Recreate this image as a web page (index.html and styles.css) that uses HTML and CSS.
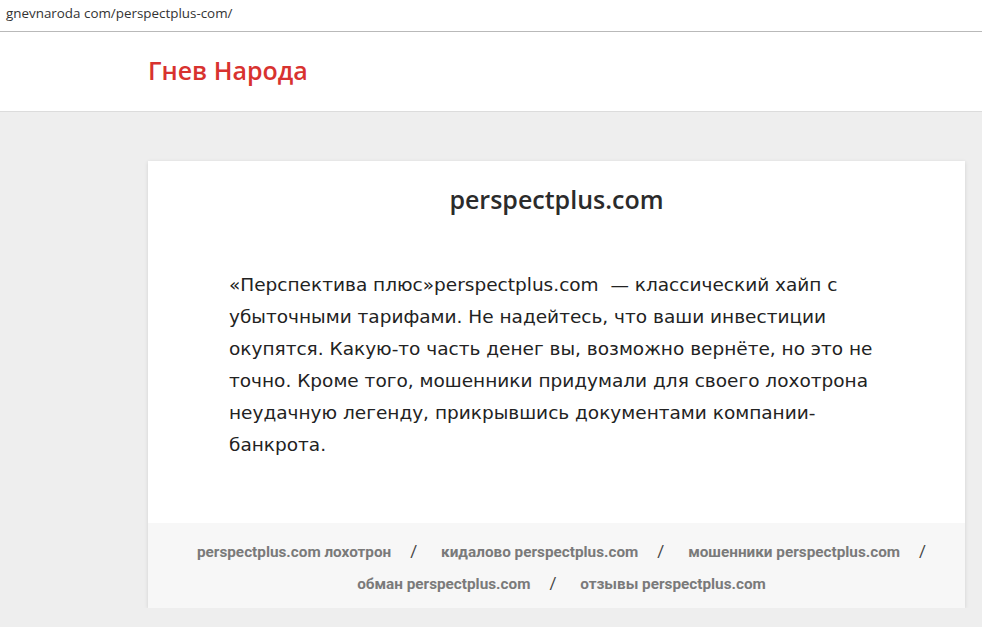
FILE: index.html
```html
<!DOCTYPE html>
<html lang="ru">
<head>
    <meta charset="UTF-8">
    <meta name="viewport" content="width=device-width, initial-scale=1.0">
    <title>perspectplus.com</title>
    <link rel="stylesheet" href="styles.css">
</head>
<body>
    <div class="urlbar">gnevnaroda com/perspectplus-com/</div>

    <header class="site-header">
        <div class="wrap">
            <a class="logo" href="#">Гнев Народа</a>
        </div>
    </header>

    <main class="wrap">
        <article class="post">
            <h1 class="post-title">perspectplus.com</h1>
            <div class="post-body">
                <p>«Перспектива плюс»perspectplus.com &nbsp;— классический хайп с убыточными тарифами. Не надейтесь, что ваши инвестиции окупятся. Какую-то часть денег вы, возможно вернёте, но это не точно. Кроме того, мошенники придумали для своего лохотрона неудачную легенду, прикрывшись документами компании-банкрота.</p>
            </div>
            <footer class="post-tags">
                <a href="#">perspectplus.com лохотрон</a><span class="sep">/</span>
                <a href="#">кидалово perspectplus.com</a><span class="sep">/</span>
                <a href="#">мошенники perspectplus.com</a><span class="sep">/</span>
                <a href="#">обман perspectplus.com</a><span class="sep">/</span>
                <a href="#">отзывы perspectplus.com</a>
            </footer>
        </article>
    </main>
</body>
</html>
```

FILE: styles.css
```css
body {
    margin: 0;
    background-color: #eeeeee;
    font-family: "Open Sans", "Noto Sans", sans-serif;
    color: #222;
}

.urlbar {
    height: 32px;
    box-sizing: border-box;
    padding: 4px 6px 0;
    background-color: #fff;
    border-bottom: 1px solid #b9b9b9;
    font-size: 13.4px;
    color: #333;
}

.wrap {
    width: 817px;
    margin: 0 0 0 148px;
}

.site-header {
    background-color: #fff;
    border-bottom: 1px solid #dcdcdc;
    height: 79px;
}

.site-header .wrap {
    display: flex;
    align-items: center;
    height: 100%;
}

.logo {
    color: #d8322f;
    font-size: 25px;
    font-weight: 600;
    text-decoration: none;
    margin-top: -3px;
}

main.wrap {
    padding-top: 49px;
}

.post {
    background-color: #fff;
    box-shadow: 0 1px 4px rgba(0, 0, 0, 0.12);
}

.post-title {
    margin: 0;
    padding: 22px 0 0;
    text-align: center;
    font-size: 25px;
    font-weight: 600;
    color: #2b2b2b;
    line-height: 32px;
}

.post-body {
    padding: 54px 81px 62px;
}

.post-body p {
    margin: 0;
    font-family: "DejaVu Sans", sans-serif;
    font-size: 18.5px;
    line-height: 32px;
    color: #222;
}

/* spaces between tags are widened, so the one at a line end hangs */
.post-tags {
    background-color: #f7f7f7;
    padding: 13px 16px 8px 26px;
    text-align: center;
    line-height: 31px;
    font-family: "Roboto", sans-serif;
    font-size: 15.3px;
    font-weight: bold;
    word-spacing: 20px;
}

.post-tags a {
    color: #7a7a7a;
    text-decoration: none;
    word-spacing: normal;
}

.sep {
    color: #444;
    font-weight: normal;
    font-size: 17px;
    margin-left: 19px;
}
```
